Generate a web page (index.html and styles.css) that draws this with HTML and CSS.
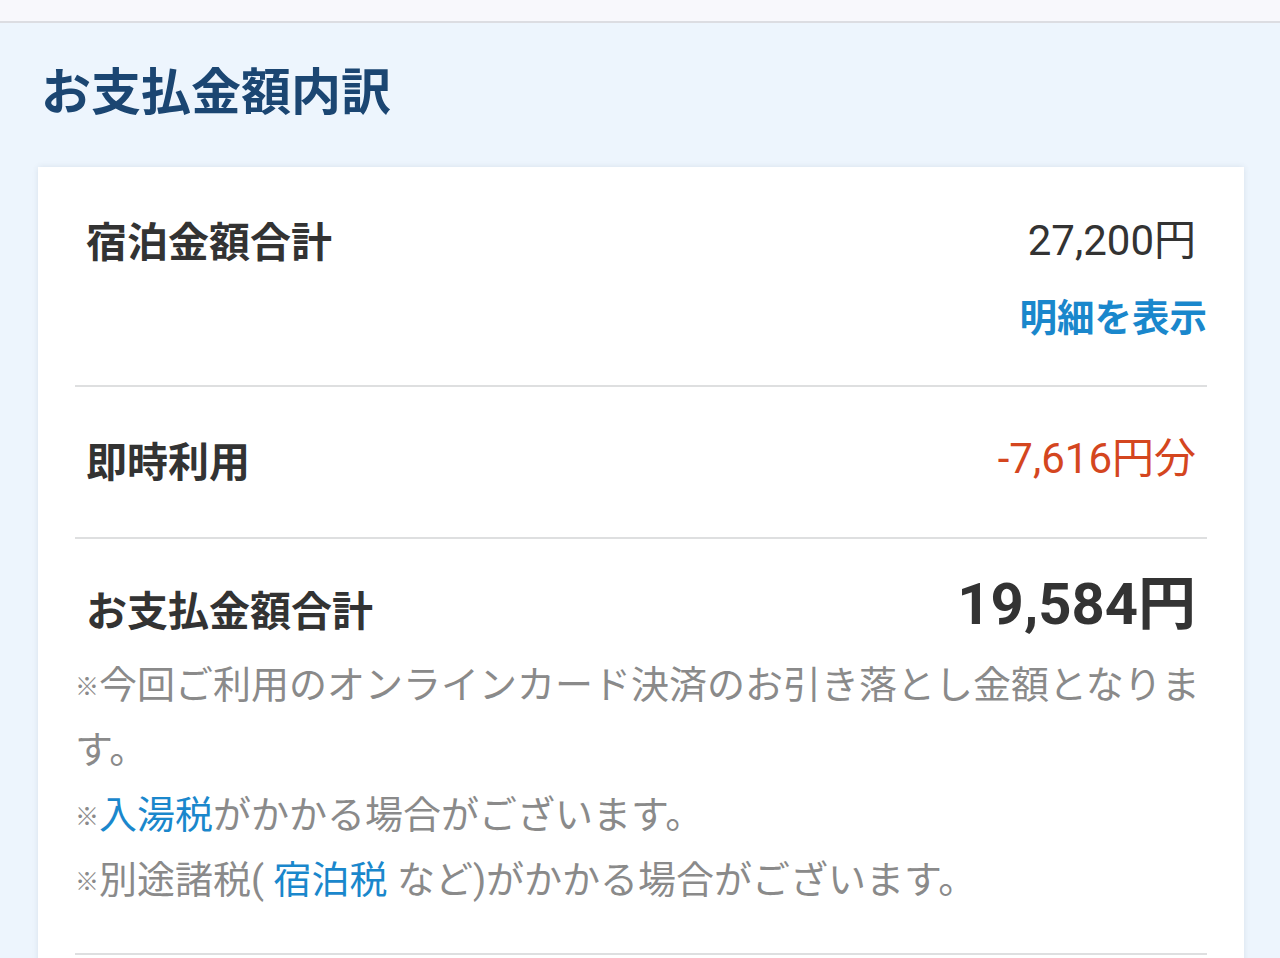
FILE: index.html
```html
<!DOCTYPE html>
<html lang="ja">
<head>
<meta charset="utf-8">
<link rel="stylesheet" href="styles.css">
</head>
<body>
<div class="topbar"></div>
<main class="section">
  <h1 class="title">お支払金額内訳</h1>
  <div class="card">
    <div class="row row-first">
      <div class="line">
        <span class="label">宿泊金額合計</span>
        <span class="value value-first">27,200円</span>
      </div>
      <div class="link-line"><a class="detail-link">明細を表示</a></div>
    </div>
    <div class="row row-mid">
      <div class="line">
        <span class="label">即時利用</span>
        <span class="value value-red">-7,616円分</span>
      </div>
    </div>
    <div class="row row-total">
      <div class="line line-total">
        <span class="label">お支払金額合計</span>
        <span class="value value-total">19,584円</span>
      </div>
      <div class="notes">
        <p class="note"><span class="mark">※</span>今回ご利用のオンラインカード決済のお引き落とし金額となります。</p>
        <p class="note"><span class="mark">※</span><a class="note-link">入湯税</a>がかかる場合がございます。</p>
        <p class="note"><span class="mark">※</span>別途諸税( <a class="note-link">宿泊税</a> など)がかかる場合がございます。</p>
      </div>
    </div>
  </div>
</main>
</body>
</html>
```
FILE: styles.css
```css
* { box-sizing: border-box; }
html, body {
  margin: 0;
  padding: 0;
}
body {
  background: #edf5fd;
  font-family: Roboto, "Noto Sans CJK JP", sans-serif;
  color: #333;
  height: 958px;
  overflow: hidden;
}
.topbar {
  height: 23px;
  background: #f8f8fc;
  border-bottom: 2px solid #dcdde2;
}
.section {
  padding: 35px 36px 0 38px;
}
.title {
  margin: 0 0 49px 3px;
  font-size: 50px;
  line-height: 60px;
  font-weight: 700;
  color: #1b4672;
  font-family: "Noto Sans CJK JP", sans-serif;
}
.card {
  background: #fff;
  padding: 0 37px;
  box-shadow: 0 0 6px rgba(40, 60, 90, 0.10);
  min-height: 900px;
}
.row {
  border-bottom: 2px solid #dedfe0;
}
.row-first { padding: 44px 0 45px; }
.row-mid { padding: 44px 0 50px; }
.row-total { padding: 41px 0 40px; }
.line {
  display: flex;
  justify-content: space-between;
  align-items: center;
  padding: 0 11px;
  height: 56px;
}
.line-total {
  align-items: flex-end;
}
.label {
  font-family: "Noto Sans CJK JP", sans-serif;
  font-size: 41px;
  font-weight: 700;
  line-height: 56px;
  color: #333;
}
.value {
  font-size: 42px;
  line-height: 56px;
  color: #333;
}
.value-first {
  padding-top: 4px;
}
.value-red {
  color: #d4461f;
}
.value-total {
  font-size: 58px;
  line-height: 60px;
  font-weight: 700;
  padding-bottom: 2px;
}
.link-line {
  display: flex;
  justify-content: flex-end;
  margin-top: 23px;
}
.detail-link {
  font-family: "Noto Sans CJK JP", sans-serif;
  font-size: 37.5px;
  line-height: 50px;
  font-weight: 700;
  color: #1a87cc;
}
.notes {
  margin-top: 17px;
}
.note {
  margin: 0;
  font-size: 38px;
  line-height: 65px;
  color: #8a8a8a;
}
.mark {
  font-size: 24px;
  line-height: 1;
  vertical-align: 3px;
}
.note-link {
  color: #1a87cc;
}
```
